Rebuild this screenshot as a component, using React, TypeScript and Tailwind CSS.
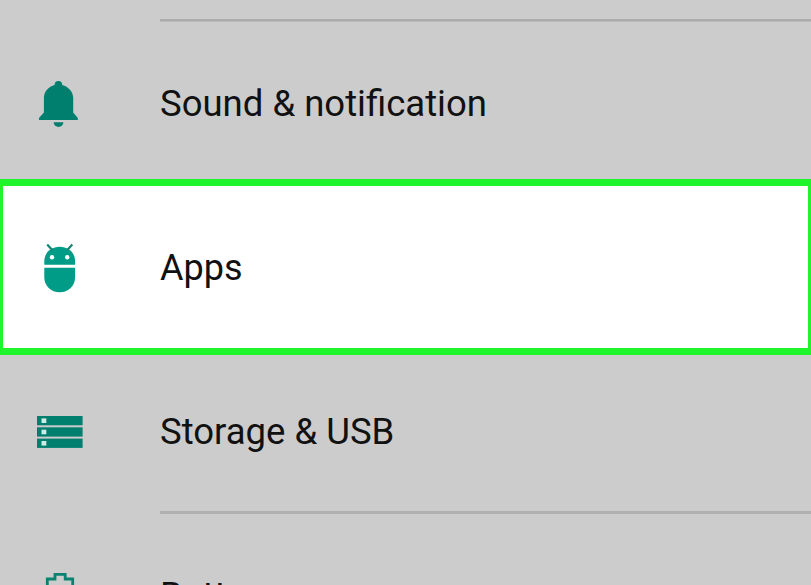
function BellIcon() {
  return (
    <svg width="80" height="70" viewBox="20 70 80 70" fill="#007f6e">
      <path d="M39 120V118L43.900 112.500V98C43.900 91.500 48.500 86.700 54.600 85V84.800A3.700 3.700 0 0 1 62.200 84.800V85C68.300 86.700 73.200 91.500 73.200 98V112.500L77.800 118V120Z" />
      <path d="M53.600 122.200H63.400A4.900 4.700 0 0 1 53.600 122.200Z" />
    </svg>
  );
}

function AndroidIcon() {
  return (
    <svg width="80" height="75" viewBox="20 230 80 75" fill="#009c87">
      <path d="M44.300 264.800V261.500C44.300 252.500 51 246.800 59.700 246.800S75.100 252.500 75.100 261.500V264.800Z" />
      <path d="M44.300 267.800H75.100V277.200C75.100 286 68.500 292.200 59.700 292.200S44.300 286 44.300 277.200Z" />
      <path d="M47.200 244.500L52.200 250M72.300 244.500L67.300 250" fill="none" stroke="#168575" strokeWidth="2.200" />
      <circle cx="52" cy="257.300" r="2.200" fill="#fff" />
      <circle cx="67.200" cy="257.300" r="2.200" fill="#fff" />
    </svg>
  );
}

function StorageIcon() {
  return (
    <svg width="80" height="60" viewBox="20 400 80 60" fill="#007f6e">
      {[416, 427.3, 438.6].map((y) => (
        <g key={y}>
          <rect x="37" y={y} width="45.600" height="9.300" />
          <rect x="41.500" y={y + 2.4} width="4.800" height="4.600" fill="#cbebe5" />
        </g>
      ))}
    </svg>
  );
}

function BatteryIcon() {
  return (
    <svg width="80" height="60" viewBox="20 560 80 60" fill="none" stroke="#0b8270" strokeWidth="2.800">
      <path d="M47.300 617V579H55V574.300H65.200V579H72.700V617Z" />
    </svg>
  );
}

export default function App() {
  return (
    <main className="flex h-[585px] w-[811px] flex-col overflow-hidden bg-[#cccccc] font-[Roboto,sans-serif] text-[36.5px] leading-[42px] whitespace-nowrap text-[#111111]">
      <div className="mt-[19px] ml-40 h-[3px] shrink-0 border-b border-[#bababa] bg-[#acacac]" />
      <div className="flex h-[157px] shrink-0">
        <div className="w-40 shrink-0 pt-12 pl-5"><BellIcon /></div>
        <span className="pt-[61px]">Sound &amp; notification</span>
      </div>
      <div className="flex h-[176px] shrink-0 border-x-[3px] border-y-[7px] border-[#20f52b] bg-white">
        <div className="w-[157px] shrink-0 pt-11 pl-[17px]"><AndroidIcon /></div>
        <span className="pt-[61px] text-[36px]">Apps</span>
      </div>
      <div className="flex h-[159px] shrink-0">
        <div className="w-40 shrink-0 pt-[45px] pl-5"><StorageIcon /></div>
        <div className="flex-1 border-b-[3px] border-[#b0b0b0] pt-14">Storage &amp; USB</div>
      </div>
      <div className="flex h-[71px] shrink-0">
        <div className="w-40 shrink-0 pt-[46px] pl-5"><BatteryIcon /></div>
        <span className="pt-[61px]">Battery</span>
      </div>
    </main>
  );
}
